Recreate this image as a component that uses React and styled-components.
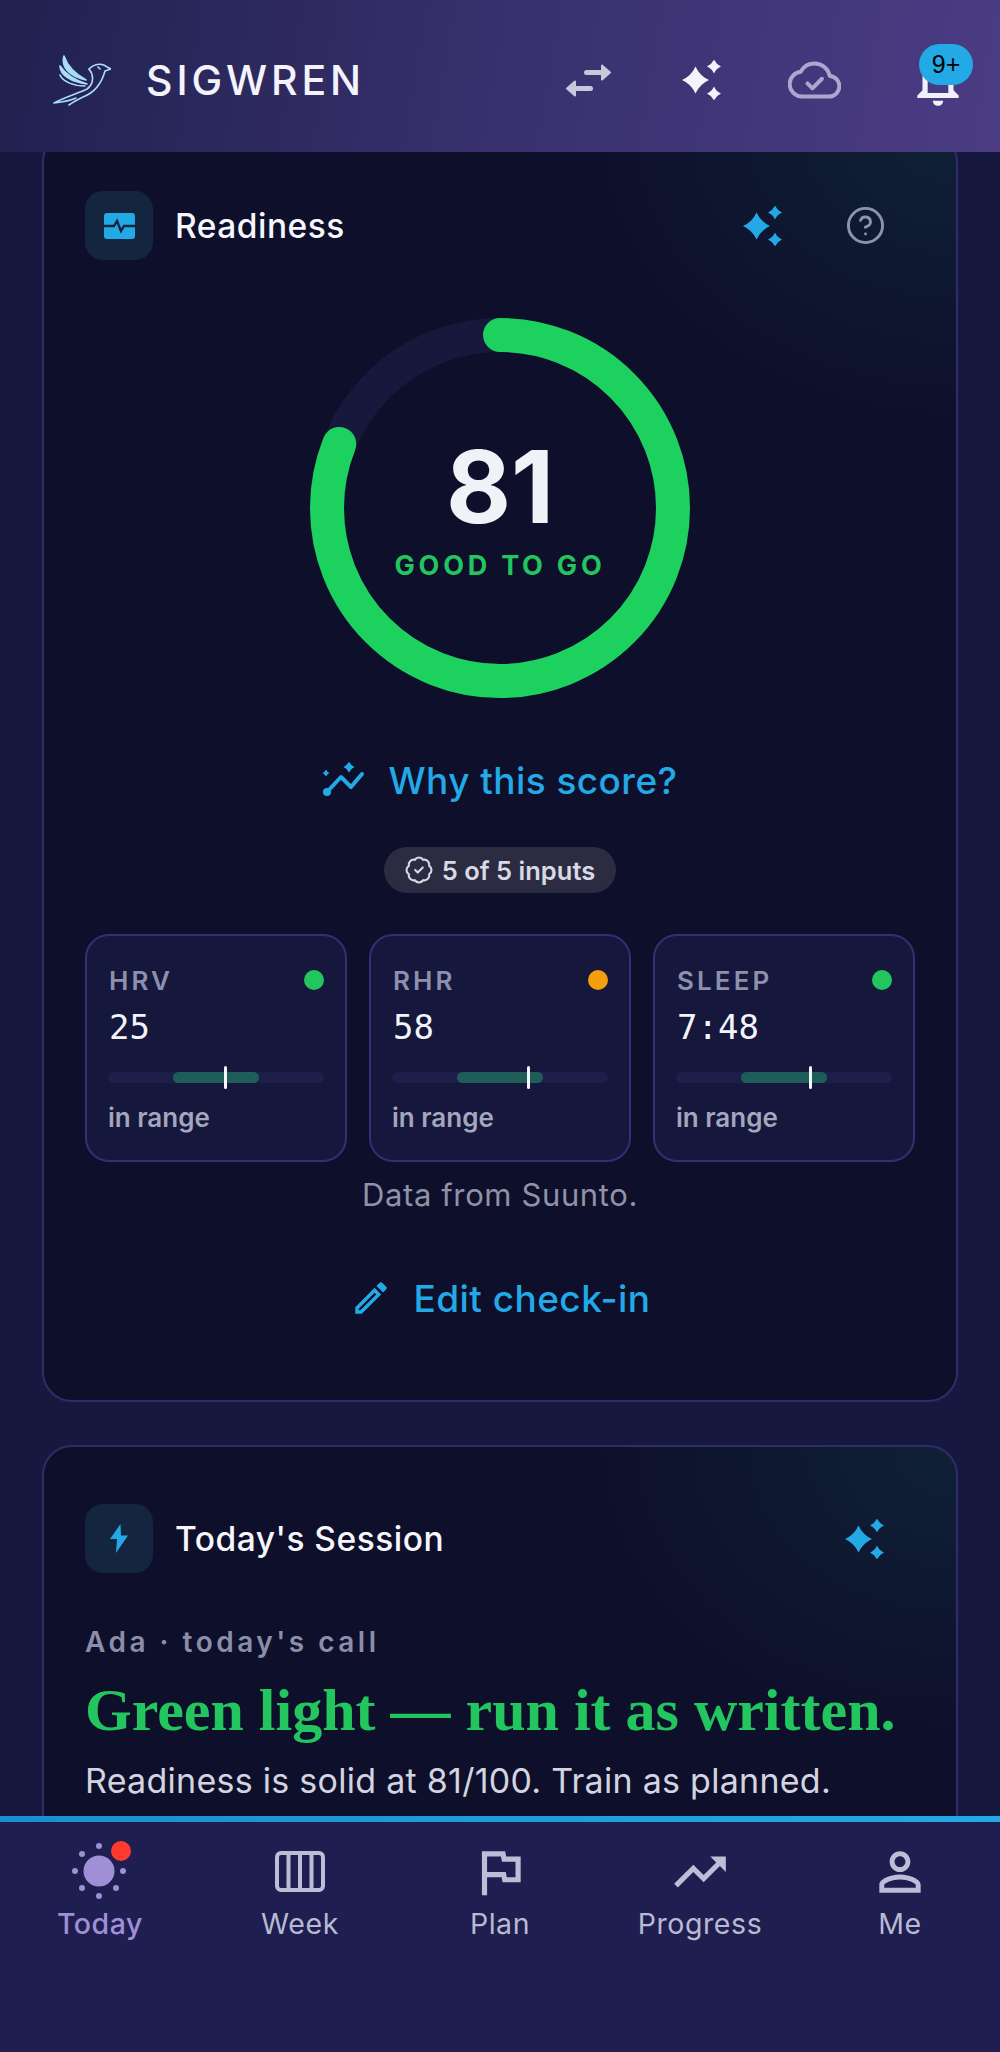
import styled, { createGlobalStyle } from "styled-components";
import { BadgeCheck, CircleHelp } from "lucide-react";

const star = (cx, cy, r) => {
  const k = r * 0.31;
  return `M${cx} ${cy - r}Q${cx + k} ${cy - k} ${cx + r} ${cy}Q${cx + k} ${cy + k} ${cx} ${cy + r}Q${cx - k} ${cy + k} ${cx - r} ${cy}Q${cx - k} ${cy - k} ${cx} ${cy - r}Z`;
};

function Sparkles({ size = 40, color = "#23a9e6" }) {
  return (
    <svg width={size} height={size} viewBox="0 0 40 40" fill={color}>
      <path d={star(13.5, 20, 13.5)} />
      <path d={star(32, 6.5, 7)} />
      <path d={star(32, 33.5, 7)} />
    </svg>
  );
}

function BirdLogo() {
  return (
    <svg width="58" height="51" viewBox="0 0 58 51" fill="none" stroke="#a9dcf8" strokeWidth="1.6" strokeLinecap="round" strokeLinejoin="round">
      <path d="M11 1C8 11 15 21 33 25C24 20 15 13 11 1Z" fill="#a9dcf8" />
      <path d="M7 11C7 20 18 27 34 29C24 26 13 20 7 11Z" fill="#a9dcf8" />
      <path d="M7 20C10 27 21 31 32 31" />
      <path d="M36 14C42 8 50 8 54 12L58 14L52 16C49 27 43 37 30 42C26 44 20 47 16 50" />
      <path d="M36 14C41 20 41 29 34 34C26 38 12 42 1 48C10 47 17 46 23 43" />
      <path d="M45 12L47 14" />
    </svg>
  );
}

function SwapIcon() {
  return (
    <svg width="45" height="33" viewBox="0 0 45 33" fill="#c8c7dc">
      <rect x="18" y="6" width="20" height="5" rx="2.5" />
      <path d="M36 1.5L44 8.5L36 15.5Z" stroke="#c8c7dc" strokeWidth="2" strokeLinejoin="round" />
      <rect x="8" y="22" width="19" height="5" rx="2.5" />
      <path d="M9 17.5L1 24.5L9 31.5Z" stroke="#c8c7dc" strokeWidth="2" strokeLinejoin="round" />
    </svg>
  );
}

function CloudIcon() {
  return (
    <svg width="53" height="38" viewBox="-0.8 3.2 25.6 17.6" fill="none" stroke="#ada6cf" strokeWidth="1.9" strokeLinecap="round" strokeLinejoin="round">
      <path d="M19.35 10.04C18.67 6.59 15.64 4 12 4 9.11 4 6.6 5.64 5.35 8.04 2.34 8.36 0 10.91 0 14c0 3.31 2.69 6 6 6h13c2.76 0 5-2.24 5-5 0-2.64-2.05-4.78-4.65-4.96z" />
      <path d="M8.6 13.6L11 16L15.6 11.4" />
    </svg>
  );
}

function BellIcon() {
  return (
    <svg width="62" height="62" viewBox="0 0 24 24" fill="#f1f0fa">
      <path d="M12 22c1.1 0 2-.9 2-2h-4c0 1.1.89 2 2 2zm6-6v-5c0-3.07-1.64-5.64-4.5-6.32V4c0-.83-.67-1.5-1.5-1.5s-1.5.67-1.5 1.5v.68C7.63 5.36 6 7.92 6 11v5l-2 2v1h16v-1l-2-2zm-2 1H8v-6c0-2.48 1.51-4.5 4-4.5s4 2.02 4 4.5v6z" />
    </svg>
  );
}

function PulseIcon() {
  return (
    <svg width="31" height="26" viewBox="0 0 31 26">
      <rect width="31" height="26" rx="3" fill="#23a9e6" />
      <path d="M0 13H10L13 8L17 18L20 13H31" fill="none" stroke="#14253f" strokeWidth="2.4" />
    </svg>
  );
}

function BoltIcon() {
  return (
    <svg width="18" height="29" viewBox="0 0 18 29" fill="#23a9e6">
      <path d="M10.5 0L0 15H7L6 29L18 11.5H11Z" />
    </svg>
  );
}

function TrendSparkIcon() {
  return (
    <svg width="44" height="36" viewBox="0 0 44 36" fill="none">
      <path d="M5 30L19 15L29 25L40 12" stroke="#23a9e6" strokeWidth="4" strokeLinecap="round" strokeLinejoin="round" />
      <circle cx="5" cy="30" r="4" fill="#23a9e6" />
      <path d={star(27, 5, 5.5)} fill="#23a9e6" />
      <path d={star(4, 11, 3.5)} fill="#23a9e6" />
    </svg>
  );
}

function PencilIcon() {
  return (
    <svg width="42" height="42" viewBox="0 0 24 24" fill="#23a9e6">
      <path d="M14.06 9.02l.92.92L5.92 19H5v-.92l9.06-9.06M17.66 3c-.25 0-.51.1-.7.29l-1.83 1.83 3.75 3.75 1.83-1.83c.39-.39.39-1.02 0-1.41l-2.34-2.34c-.2-.2-.45-.29-.71-.29zm-3.6 3.19L3 17.25V21h3.75L17.81 9.94l-3.75-3.75z" />
    </svg>
  );
}

function SunIcon() {
  const rays = [[30, 5], [6, 30], [54, 30], [30, 55], [13, 13], [13, 47], [47, 47]];
  return (
    <svg width="62" height="62" viewBox="0 0 62 62" fill="#a08fd6">
      <circle cx="30" cy="30" r="15.5" />
      {rays.map(([x, y]) => (
        <circle key={`${x}-${y}`} cx={x} cy={y} r="3" />
      ))}
    </svg>
  );
}

function WeekIcon() {
  return (
    <svg width="62" height="62" viewBox="0 0 62 62" fill="none" stroke="#bcbdd6" strokeWidth="4">
      <rect x="8" y="12" width="46" height="37" rx="4" />
      <path d="M19.5 12V49M31 12V49M42.5 12V49" />
    </svg>
  );
}

function NavPath({ d }) {
  return (
    <svg width="62" height="62" viewBox="0 0 24 24" fill="#bcbdd6">
      <path d={d} />
    </svg>
  );
}

const FLAG = "m12.36 6 .08.39.32 1.61H18v6h-3.36l-.08-.39-.32-1.61H7V6h5.36M14 4H5v17h2v-7h5.6l.4 2h7V6h-5.6L14 4z";
const TREND = "M16 6l2.29 2.29-4.88 4.88-4-4L2 16.59 3.41 18l6-6 4 4 6.3-6.29L22 12V6z";
const PERSON = "M12 5.9c1.16 0 2.1.94 2.1 2.1s-.94 2.1-2.1 2.1S9.9 9.16 9.9 8s.94-2.1 2.1-2.1m0 9c2.97 0 6.1 1.46 6.1 2.1v1.1H5.9V17c0-.64 3.13-2.1 6.1-2.1M12 4C9.79 4 8 5.79 8 8s1.79 4 4 4 4-1.79 4-4-1.79-4-4-4zm0 9c-2.67 0-8 1.34-8 4v3h16v-3c0-2.66-5.33-4-8-4z";

const metrics = [
  { label: "HRV", value: "25", dot: "#22c55e", tick: 54 },
  { label: "RHR", value: "58", dot: "#f59e0b", tick: 63 },
  { label: "SLEEP", value: "7:48", dot: "#22c55e", tick: 62 },
];

const R = 173;
const CIRC = 2 * Math.PI * R;

function App() {
  return (
    <>
      <GlobalStyle />
      <Page>
        <Header>
          <Brand>
            <BirdLogo />
            <BrandName>SIGWREN</BrandName>
          </Brand>
          <HeaderActions>
            <HeaderButton><SwapIcon /></HeaderButton>
            <HeaderButton><Sparkles color="#f4f3fc" /></HeaderButton>
            <HeaderButton><CloudIcon /></HeaderButton>
            <HeaderButton>
              <BellIcon />
              <Badge>9+</Badge>
            </HeaderButton>
          </HeaderActions>
        </Header>

        <Main>
          <Card $first>
            <CardHead>
              <IconTile><PulseIcon /></IconTile>
              <CardTitle>Readiness</CardTitle>
              <HeadButton><Sparkles /></HeadButton>
              <HeadButton><CircleHelp size={41} strokeWidth={1.7} color="#8f92a8" /></HeadButton>
            </CardHead>

            <Gauge>
              <svg width="380" height="380" viewBox="0 0 380 380">
                <circle cx="190" cy="190" r={R} fill="none" stroke="#17183c" strokeWidth="34" />
                <circle
                  cx="190"
                  cy="190"
                  r={R}
                  fill="none"
                  stroke="#1dd15e"
                  strokeWidth="34"
                  strokeLinecap="round"
                  strokeDasharray={`${CIRC * 0.81} ${CIRC}`}
                  transform="rotate(-90 190 190)"
                />
              </svg>
              <GaugeText>
                <Score>81</Score>
                <ScoreLabel>GOOD TO GO</ScoreLabel>
              </GaugeText>
            </Gauge>

            <LinkRow $top={60}>
              <TrendSparkIcon />
              Why this score?
            </LinkRow>

            <ChipRow>
              <Chip>
                <BadgeCheck size={30} strokeWidth={1.7} />
                5 of 5 inputs
              </Chip>
            </ChipRow>

            <MetricGrid>
              {metrics.map((m) => (
                <MetricCard key={m.label}>
                  <MetricTop>
                    <MetricLabel>{m.label}</MetricLabel>
                    <Dot $color={m.dot} />
                  </MetricTop>
                  <MetricValue>{m.value}</MetricValue>
                  <RangeBar>
                    <RangeFill />
                    <RangeTick style={{ left: `${m.tick}%` }} />
                  </RangeBar>
                  <RangeText>in range</RangeText>
                </MetricCard>
              ))}
            </MetricGrid>

            <SourceNote>Data from Suunto.</SourceNote>

            <LinkRow $top={63}>
              <PencilIcon />
              Edit check-in
            </LinkRow>
          </Card>

          <Card>
            <CardHead>
              <IconTile><BoltIcon /></IconTile>
              <CardTitle>Today's Session</CardTitle>
              <HeadButton><Sparkles /></HeadButton>
            </CardHead>
            <Eyebrow>Ada · today's call</Eyebrow>
            <Verdict>Green light — run it as written.</Verdict>
            <Summary>Readiness is solid at 81/100. Train as planned.</Summary>
          </Card>
        </Main>

        <BottomNav>
          <NavItem $active>
            <NavIcon>
              <SunIcon />
              <RedDot />
            </NavIcon>
            Today
          </NavItem>
          <NavItem>
            <NavIcon><WeekIcon /></NavIcon>
            Week
          </NavItem>
          <NavItem>
            <NavIcon><NavPath d={FLAG} /></NavIcon>
            Plan
          </NavItem>
          <NavItem>
            <NavIcon><NavPath d={TREND} /></NavIcon>
            Progress
          </NavItem>
          <NavItem>
            <NavIcon><NavPath d={PERSON} /></NavIcon>
            Me
          </NavItem>
        </BottomNav>
      </Page>
    </>
  );
}

const GlobalStyle = createGlobalStyle`
  html, body {
    margin: 0;
    background: #17183f;
  }
  * {
    box-sizing: border-box;
  }
`;

const Page = styled.div`
  height: 100vh;
  display: flex;
  flex-direction: column;
  overflow: hidden;
  font-family: Inter, "Noto Sans", sans-serif;
  background: #17183f;
`;

const Header = styled.header`
  flex: none;
  height: 152px;
  padding: 8px 6px 0 53px;
  display: flex;
  align-items: center;
  justify-content: space-between;
  background: linear-gradient(100deg, #20214f 0%, #3a3270 55%, #4b3c84 100%);
`;

const Brand = styled.div`
  display: flex;
  align-items: center;
  gap: 35px;
`;

const BrandName = styled.span`
  color: #f4f3fc;
  font-size: 41px;
  font-weight: 500;
  letter-spacing: 0.095em;
`;

const HeaderActions = styled.div`
  display: flex;
  align-items: center;
`;

const HeaderButton = styled.div`
  position: relative;
  width: 113px;
  height: 62px;
  display: flex;
  align-items: center;
  justify-content: center;
  &:last-child {
    margin-left: 10px;
  }
`;

const Badge = styled.span`
  position: absolute;
  top: -5px;
  left: 38px;
  width: 54px;
  height: 41px;
  border-radius: 21px;
  display: flex;
  align-items: center;
  justify-content: center;
  background: #23a9e6;
  color: #000;
  font-family: "Liberation Sans", sans-serif;
  font-size: 25px;
`;

const Main = styled.main`
  flex: 1;
  min-height: 0;
  overflow: hidden;
  padding: 0 42px;
  display: flex;
  flex-direction: column;
  gap: 43px;
`;

const Card = styled.section`
  flex: none;
  margin-top: ${(p) => (p.$first ? "-20px" : "0")};
  padding: 57px 41px 80px;
  border: 2px solid #2f2d68;
  border-radius: 30px;
  background:
    radial-gradient(ellipse 380px 300px at 100% 0%, #0f2137 0%, rgba(15, 33, 55, 0) 100%),
    #0e0f2a;
`;

const CardHead = styled.div`
  display: flex;
  align-items: center;
  gap: 2px;
`;

const IconTile = styled.div`
  flex: none;
  width: 68px;
  height: 69px;
  margin-right: 20px;
  border-radius: 18px;
  background: #14253f;
  display: flex;
  align-items: center;
  justify-content: center;
`;

const CardTitle = styled.h2`
  flex: 1;
  margin: 0;
  color: #f6f6fb;
  font-size: 33.5px;
  font-weight: 550;
  letter-spacing: 0.015em;
`;

const HeadButton = styled.div`
  flex: none;
  width: 100px;
  display: flex;
  justify-content: center;
`;

const Gauge = styled.div`
  position: relative;
  width: 380px;
  height: 380px;
  margin: 58px auto 0;
`;

const GaugeText = styled.div`
  position: absolute;
  inset: 0;
  display: flex;
  flex-direction: column;
  align-items: center;
  padding-top: 110px;
`;

const Score = styled.div`
  color: #f1f1f8;
  font-size: 100px;
  line-height: 118px;
  font-weight: 700;
`;

const ScoreLabel = styled.div`
  margin-top: 4px;
  color: #22c55e;
  font-size: 27px;
  line-height: 32px;
  font-weight: 650;
  letter-spacing: 0.14em;
`;

const LinkRow = styled.div`
  margin-top: ${(p) => p.$top}px;
  height: 44px;
  display: flex;
  align-items: center;
  justify-content: center;
  gap: 22px;
  color: #23a9e6;
  font-size: 37px;
  font-weight: 500;
  letter-spacing: 0.012em;
`;

const ChipRow = styled.div`
  margin-top: 45px;
  display: flex;
  justify-content: center;
`;

const Chip = styled.div`
  height: 46px;
  padding: 0 21px 0 20px;
  border-radius: 23px;
  display: flex;
  align-items: center;
  gap: 8px;
  background: #2b2c41;
  color: #d8d9e4;
  font-size: 25.5px;
  font-weight: 600;
`;

const MetricGrid = styled.div`
  margin-top: 41px;
  display: grid;
  grid-template-columns: repeat(3, 1fr);
  gap: 22px;
`;

const MetricCard = styled.div`
  padding: 29px 21px 27px;
  border: 2px solid #332f74;
  border-radius: 24px;
  background: #15173c;
`;

const MetricTop = styled.div`
  display: flex;
  align-items: center;
  justify-content: space-between;
  height: 30px;
`;

const MetricLabel = styled.span`
  margin-left: 1px;
  color: #8d90ac;
  font-size: 26px;
  font-weight: 600;
  letter-spacing: 0.12em;
`;

const Dot = styled.span`
  width: 20px;
  height: 20px;
  border-radius: 50%;
  background: ${(p) => p.$color};
`;

const MetricValue = styled.div`
  margin: 12px 0 0 1px;
  color: #f3f3f9;
  font-family: "DejaVu Sans Mono", monospace;
  font-size: 34px;
  line-height: 40px;
`;

const RangeBar = styled.div`
  position: relative;
  height: 11px;
  margin-top: 25px;
  border-radius: 6px;
  background: #1d1f4a;
`;

const RangeFill = styled.div`
  position: absolute;
  left: 30%;
  width: 40%;
  top: 0;
  bottom: 0;
  border-radius: 6px;
  background: #1f5e58;
`;

const RangeTick = styled.div`
  position: absolute;
  top: -6px;
  bottom: -6px;
  width: 3px;
  margin-left: -1px;
  border-radius: 2px;
  background: #f4f4fa;
`;

const RangeText = styled.div`
  margin-top: 20px;
  color: #a3a6bd;
  font-size: 26px;
  line-height: 30px;
  font-weight: 600;
`;

const SourceNote = styled.div`
  margin-top: 15px;
  color: #8f92a8;
  font-size: 31px;
  line-height: 36px;
  text-align: center;
  letter-spacing: 0.02em;
`;

const Eyebrow = styled.div`
  margin-top: 52px;
  color: #8a8ea8;
  font-size: 28px;
  line-height: 34px;
  font-weight: 600;
  letter-spacing: 0.125em;
`;

const Verdict = styled.h3`
  margin: 17px 0 0;
  color: #22c55e;
  font-family: "Liberation Serif", serif;
  font-size: 60px;
  line-height: 68px;
  font-weight: 700;
`;

const Summary = styled.p`
  margin: 17px 0 0;
  color: #d3d4e0;
  font-size: 34px;
  line-height: 40px;
  font-weight: 400;
  letter-spacing: 0.008em;
`;

const BottomNav = styled.nav`
  flex: none;
  height: 236px;
  padding-top: 19px;
  display: grid;
  grid-template-columns: repeat(5, 1fr);
  align-items: start;
  border-top: 6px solid;
  border-image: linear-gradient(90deg, #1a8fcf, #23a9e6) 1;
  background: #1e1f50;
`;

const NavItem = styled.div`
  display: flex;
  flex-direction: column;
  align-items: center;
  gap: 3px;
  color: ${(p) => (p.$active ? "#a08fd6" : "#b9bad2")};
  font-size: 28.5px;
  line-height: 36px;
  font-weight: ${(p) => (p.$active ? 500 : 400)};
  letter-spacing: 0.02em;
`;

const NavIcon = styled.div`
  position: relative;
  width: 62px;
  height: 62px;
`;

const RedDot = styled.span`
  position: absolute;
  top: 0;
  right: 0;
  width: 20px;
  height: 20px;
  border-radius: 50%;
  background: #ff3b30;
`;

export default App;
